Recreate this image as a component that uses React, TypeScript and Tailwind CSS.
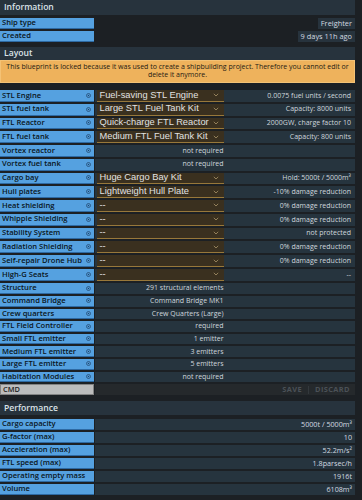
import React from 'react';

type SlotRow = { label: string; select?: string; info?: string; text?: string };

const slotRows: SlotRow[] = [
  { label: 'STL Engine', select: 'Fuel-saving STL Engine', info: '0.0075 fuel units / second' },
  { label: 'STL fuel tank', select: 'Large STL Fuel Tank Kit', info: 'Capacity: 8000 units' },
  { label: 'FTL Reactor', select: 'Quick-charge FTL Reactor', info: '2000GW, charge factor 10' },
  { label: 'FTL fuel tank', select: 'Medium FTL Fuel Tank Kit', info: 'Capacity: 800 units' },
  { label: 'Vortex reactor', text: 'not required' },
  { label: 'Vortex fuel tank', text: 'not required' },
  { label: 'Cargo bay', select: 'Huge Cargo Bay Kit', info: 'Hold: 5000t / 5000m³' },
  { label: 'Hull plates', select: 'Lightweight Hull Plate', info: '-10% damage reduction' },
  { label: 'Heat shielding', select: '--', info: '0% damage reduction' },
  { label: 'Whipple Shielding', select: '--', info: '0% damage reduction' },
  { label: 'Stability System', select: '--', info: 'not protected' },
  { label: 'Radiation Shielding', select: '--', info: '0% damage reduction' },
  { label: 'Self-repair Drone Hub', select: '--', info: '0% damage reduction' },
  { label: 'High-G Seats', select: '--', info: '--' },
];

const fixedRows = [
  ['Structure', '291 structural elements'],
  ['Command Bridge', 'Command Bridge MK1'],
  ['Crew quarters', 'Crew Quarters (Large)'],
  ['FTL Field Controller', 'required'],
  ['Small FTL emitter', '1 emitter'],
  ['Medium FTL emitter', '3 emitters'],
  ['Large FTL emitter', '5 emitters'],
  ['Habitation Modules', 'not required'],
];

const perfRows = [
  ['Cargo capacity', '5000t / 5000m³'],
  ['G-factor (max)', '10'],
  ['Acceleration (max)', '52.2m/s²'],
  ['FTL speed (max)', '1.8parsec/h'],
  ['Operating empty mass', '1916t'],
  ['Volume', '6108m³'],
];

const labelCls =
  "w-[93.5px] shrink-0 bg-[#55a1e0] border-b border-[#2e6aa3] pl-[2px] flex items-center text-[7.6px] font-semibold text-[#0a1520] leading-none whitespace-nowrap";

const HelpIcon = () => (
  <svg width="5" height="5" viewBox="0 0 10 10" className="ml-auto mr-[3px] shrink-0">
    <circle cx="5" cy="5" r="4" fill="none" stroke="#1f4468" strokeWidth="1.4" />
    <circle cx="5" cy="5" r="1.5" fill="#1f4468" />
  </svg>
);

const Chevron = () => (
  <svg width="6" height="4" viewBox="0 0 6 4" className="ml-auto mr-[5px] shrink-0">
    <path d="M0.8 0.8 L3 3 L5.2 0.8" fill="none" stroke="#a8946a" strokeWidth="0.8" />
  </svg>
);

const SectionHeader = ({ title, tall }: { title: string; tall?: boolean }) => (
  <div
    className={`${tall ? 'h-[15px]' : 'h-[13.3px]'} bg-[#27333d] flex items-center pl-[4px] text-[8.6px] font-semibold text-[#dbe2e8]`}
  >
    {title}
  </div>
);

export default function App() {
  return (
    <div
      className="w-[362px] h-[500px] overflow-hidden bg-[#1c2024]"
      style={{ fontFamily: '"Open Sans", "Noto Sans", sans-serif' }}
    >
      <div className="w-[355px] flex flex-col">
        <SectionHeader title="Information" tall />

        <div className="mt-[3px] flex flex-col gap-[2px]">
          {[
            ['Ship type', 'Freighter'],
            ['Created', '9 days 11h ago'],
          ].map(([l, v]) => (
            <div key={l} className="h-[11px] flex">
              <div className={labelCls}>{l}</div>
              <div className="ml-auto h-full bg-[#27333d] px-[3px] flex items-center text-[7.4px] text-[#d3dae0]">
                {v}
              </div>
            </div>
          ))}
        </div>

        <div className="mt-[4.7px]">
          <SectionHeader title="Layout" />
        </div>
        <div className="h-[23px] bg-[#eeb25c] border border-[#f4c275] flex flex-col items-center justify-center text-center text-[7px] leading-[8px] text-[#1d1a14]">
          <span>This blueprint is locked because it was used to create a shipbuilding project. Therefore you cannot edit or</span>
          <span>delete it anymore.</span>
        </div>

        <div className="mt-[7px] flex flex-col gap-[2px]">
          {slotRows.map((r) => (
            <div key={r.label} className="h-[11.77px] flex">
              <div className={labelCls}>
                {r.label}
                <HelpIcon />
              </div>
              <div className="flex-1 ml-[1.5px] bg-[#26343e] flex pl-[1.5px]">
                {r.select ? (
                  <>
                    <div
                      className="w-[127px] shrink-0 h-full bg-[#3a301f] border-b border-[#98783a] flex items-center pl-[3px] text-[9.3px] leading-none text-[#e2e2e2] whitespace-nowrap overflow-hidden"
                      style={{ fontFamily: '"Liberation Sans", Arial, sans-serif' }}
                    >
                      {r.select}
                      <Chevron />
                    </div>
                    <div className="flex-1 flex items-center justify-end pr-[4px] text-[7px] text-[#d0d7dd] whitespace-nowrap">
                      {r.info}
                    </div>
                  </>
                ) : (
                  <div className="w-[127px] flex items-center justify-end text-[7px] text-[#d0d7dd] whitespace-nowrap">
                    {r.text}
                  </div>
                )}
              </div>
            </div>
          ))}
        </div>

        <div className="mt-[2.5px] flex flex-col gap-[2px]">
          {fixedRows.map(([l, v]) => (
            <div key={l} className="h-[10.67px] flex">
              <div className={labelCls}>
                {l}
                <HelpIcon />
              </div>
              <div className="flex-1 ml-[1.5px] bg-[#26343e] flex pl-[1.5px]">
                <div className="w-[127px] flex items-center justify-end text-[7px] text-[#d0d7dd] whitespace-nowrap">
                  {v}
                </div>
              </div>
            </div>
          ))}
          <div className="h-[11px] flex">
            <div className="w-[94px] shrink-0 bg-[#bcbcbc] border border-[#838383] pl-[2px] flex items-center text-[7.4px] font-semibold text-[#1e1e1e] leading-none">
              CMD
            </div>
            <div className="flex-1 ml-[1px] bg-[#25292c] flex items-center justify-end pr-[5px] text-[7.4px] font-bold tracking-[0.4px] text-[#4b5157]">
              <span>SAVE</span>
              <span className="mx-[6px] w-px h-[8px] bg-[#33383c]" />
              <span>DISCARD</span>
            </div>
          </div>
        </div>

        <div className="mt-[6px]">
          <SectionHeader title="Performance" />
        </div>

        <div className="mt-[4px] flex flex-col gap-[2px]">
          {perfRows.map(([l, v]) => (
            <div key={l} className="h-[11px] flex">
              <div className={labelCls}>{l}</div>
              <div className="flex-1 ml-[1.5px] bg-[#26343e] flex items-center justify-end pr-[3px] text-[7.2px] text-[#d3dae0] whitespace-nowrap">
                {v}
              </div>
            </div>
          ))}
        </div>
      </div>
    </div>
  );
}
